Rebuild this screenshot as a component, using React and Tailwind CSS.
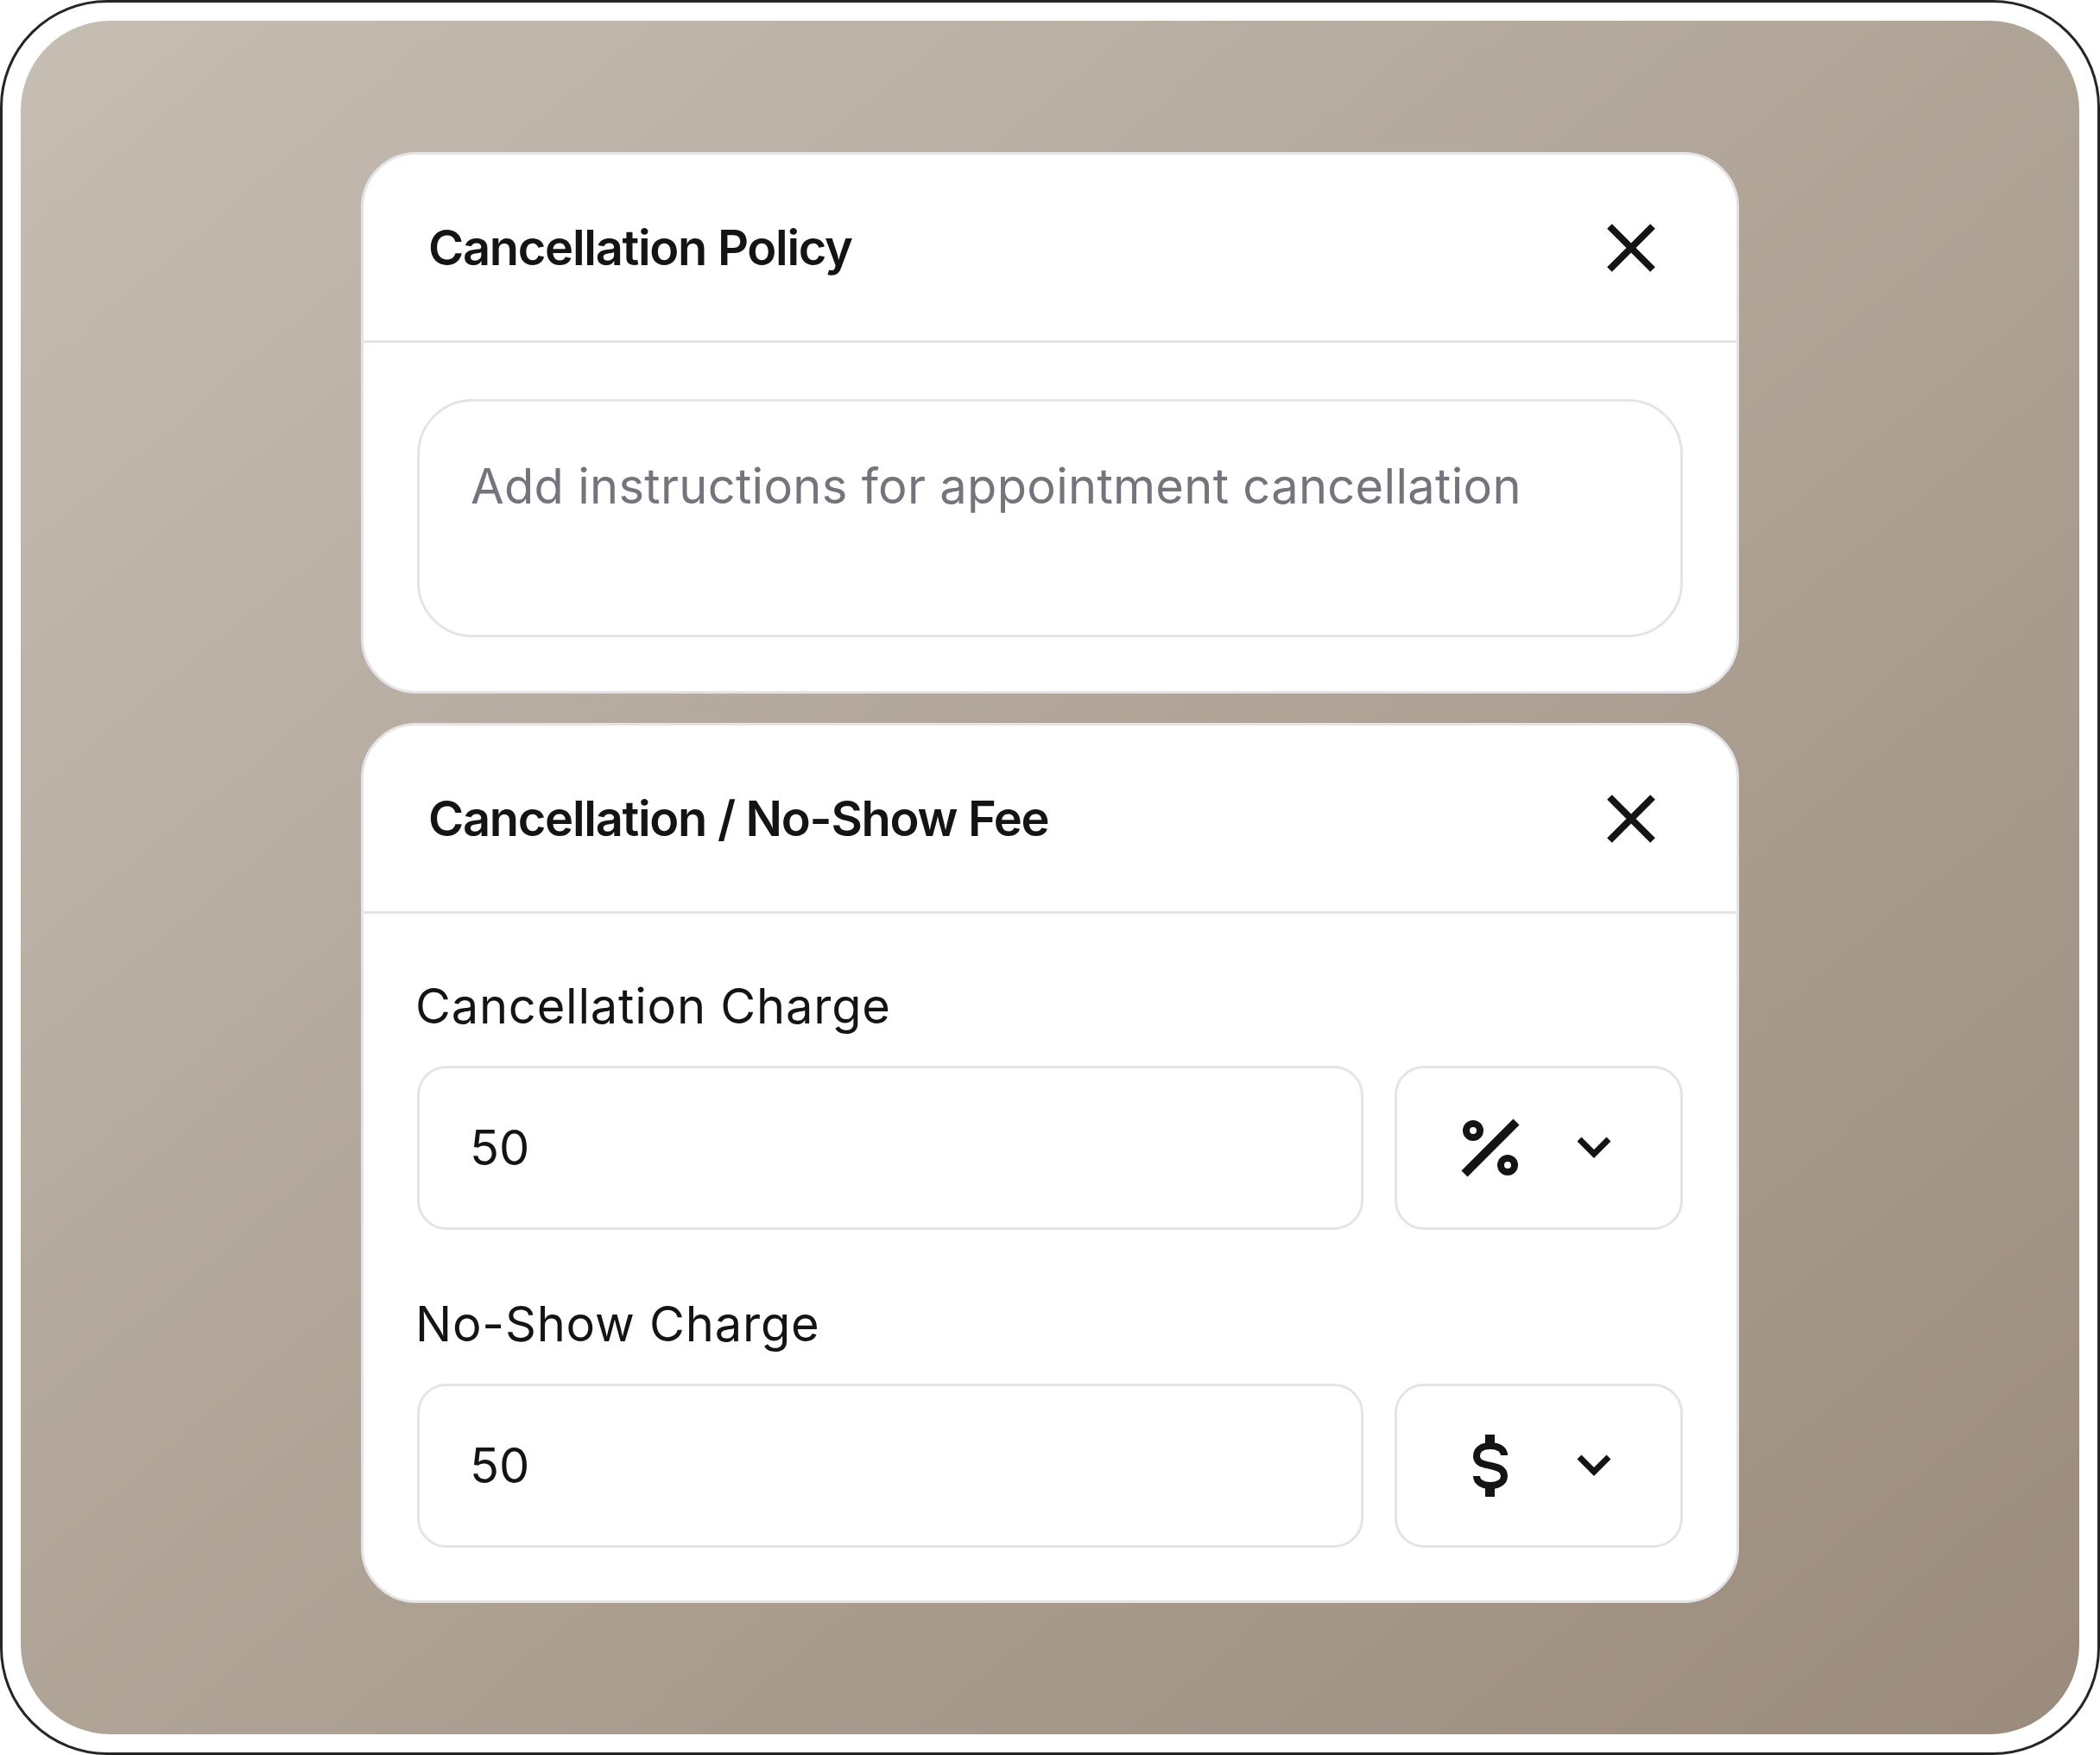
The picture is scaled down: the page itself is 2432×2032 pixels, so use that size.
import React from "react";

const font = { fontFamily: "Inter, 'Noto Sans', sans-serif" };

function CloseIcon() {
  return (
    <svg width="56" height="56" viewBox="0 0 56 56" className="shrink-0">
      <path d="M3 3 L53 53 M53 3 L3 53" stroke="#141414" strokeWidth="8" fill="none" />
    </svg>
  );
}

function Chevron() {
  return (
    <svg width="40" height="26" viewBox="0 0 40 26" className="shrink-0">
      <polyline points="3,3 20,20 37,3" stroke="#141414" strokeWidth="7" fill="none" />
    </svg>
  );
}

function PercentIcon() {
  return (
    <svg width="68" height="68" viewBox="0 0 68 68">
      <circle cx="14" cy="14" r="8" stroke="#141414" strokeWidth="8" fill="none" />
      <circle cx="54" cy="54" r="8" stroke="#141414" strokeWidth="8" fill="none" />
      <path d="M4 64 L64 4" stroke="#141414" strokeWidth="10" fill="none" />
    </svg>
  );
}

function DollarIcon() {
  return (
    <svg width="44" height="72" viewBox="0 0 44 72">
      <path d="M21.5 0 V12 M21.5 60 V72" stroke="#141414" strokeWidth="11" fill="none" />
      <path
        d="M38 24 C38 17 31 13 22 13 C13 13 6 17 6 25 C6 33 13 34 22 36 C31 38 38 40 38 48 C38 55 31 59 22 59 C13 59 6 55 6 48"
        stroke="#141414"
        strokeWidth="8"
        fill="none"
      />
    </svg>
  );
}

function CardHeader({ title }) {
  return (
    <div className="h-[218px] border-b-[3px] border-[#e4e4e7] flex items-center justify-between pl-[75px] pr-[94px]">
      <h2 className="text-[56px] leading-none font-semibold text-[#141414] tracking-[-1.3px]">
        {title}
      </h2>
      <CloseIcon />
    </div>
  );
}

function ChargeRow({ label, value, icon }) {
  return (
    <div className="flex flex-col gap-[26px]">
      <label className="-ml-[2px] text-[56px] leading-[86px] tracking-[0.8px] text-[#141414]">
        {label}
      </label>
      <div className="flex gap-[36px]">
        <div className="flex-1 h-[190px] rounded-[34px] border-[3px] border-[#e4e4e7] flex items-center pl-[58px] text-[56px] text-[#141414]">
          {value}
        </div>
        <div className="w-[334px] h-[190px] rounded-[34px] border-[3px] border-[#e4e4e7] flex items-center pl-[72px]">
          <div className="w-[72px] flex justify-center">{icon}</div>
          <div className="ml-[64px]">
            <Chevron />
          </div>
        </div>
      </div>
    </div>
  );
}

export default function App() {
  return (
    <div className="w-[2432px] h-[2032px] bg-white" style={font}>
      <div className="h-full rounded-[124px] border-[3px] border-[#262626] p-[21px]">
        <div className="h-full rounded-[104px] bg-linear-to-br from-[#c6bdb3] to-[#9a8b7c] flex flex-col items-center justify-center gap-[34px]">
          {/* policy */}
          <div className="w-[1596px] bg-white rounded-[64px] border-[3px] border-[#e4e4e7] overflow-hidden">
            <CardHeader title="Cancellation Policy" />
            <div className="px-[62px] pt-[65px] pb-[62px]">
              <textarea
                className="block w-full h-[276px] resize-none rounded-[64px] border-[3px] border-[#e4e4e7] pl-[59px] pr-[40px] pt-[56px] text-[56px] leading-[84px] tracking-[0.3px] text-[#141414] placeholder:text-[#75747c] outline-none"
                placeholder="Add instructions for appointment cancellation"
              />
            </div>
          </div>

          {/* fee */}
          <div className="w-[1596px] bg-white rounded-[64px] border-[3px] border-[#e4e4e7] overflow-hidden">
            <CardHeader title="Cancellation / No-Show Fee" />
            <div className="px-[62px] pt-[64px] pb-[61px] flex flex-col gap-[66px]">
              <ChargeRow label="Cancellation Charge" value="50" icon={<PercentIcon />} />
              <ChargeRow label="No-Show Charge" value="50" icon={<DollarIcon />} />
            </div>
          </div>
        </div>
      </div>
    </div>
  );
}
